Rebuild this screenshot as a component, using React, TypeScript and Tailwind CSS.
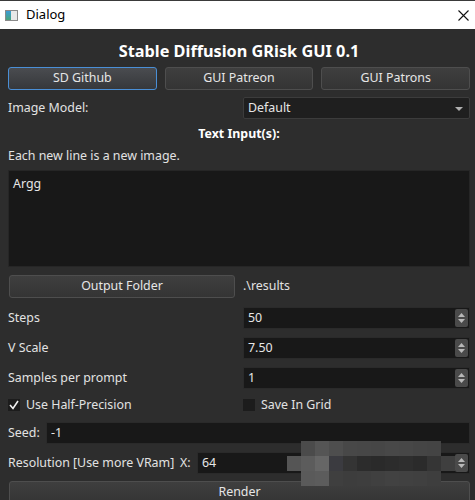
import React from "react";

const Spin = () => (
  <div className="absolute right-[1px] top-[1px] bottom-[1px] w-[13px] rounded-[2px] bg-[#4a4a4a] flex flex-col items-center justify-center gap-[2px]">
    <svg width="7" height="4" viewBox="0 0 7 4"><path d="M0 4 L3.5 0 L7 4 Z" fill="#b8b8b8" /></svg>
    <svg width="7" height="4" viewBox="0 0 7 4"><path d="M0 0 L3.5 4 L7 0 Z" fill="#b8b8b8" /></svg>
  </div>
);

const SpinBox = ({ value, className = "" }: { value: string; className?: string }) => (
  <div className={"relative h-[22px] bg-[#181818] border border-[#2a2a2a] flex items-center pl-[4px] text-[#e6e6e6] " + className}>
    {value}
    <Spin />
  </div>
);

const Btn = ({ label, active = false, className = "" }: { label: string; active?: boolean; className?: string }) => (
  <div
    className={
      "h-[23px] rounded-[3px] border flex items-center justify-center text-[#e6e6e6] " +
      (active
        ? "border-[#4a8fd6] bg-gradient-to-b from-[#4a4c50] to-[#36383b] "
        : "border-[#4e4e4e] bg-gradient-to-b from-[#3f3f3f] to-[#343434] ") +
      className
    }
  >
    {label}
  </div>
);

const blocks: string[][] = [
  ["bg-transparent", "bg-[#4b4b4b]", "bg-[#555555]", "bg-[#4e4e4e]", "bg-[#484848]", "bg-[#474747]", "bg-[#464646]", "bg-[#484848]", "bg-[#474747]", "bg-[#454545]", "bg-[#444444]", "bg-transparent"],
  ["bg-[#555555]", "bg-[#5c5c5c]", "bg-[#666666]", "bg-[#3b3b40]", "bg-[#343434]", "bg-[#2c2c2c]", "bg-[#2a2a2a]", "bg-[#2c2c2c]", "bg-[#2e2e2e]", "bg-[#2b2b2b]", "bg-[#353535]", "bg-[#3f3f3f]"],
  ["bg-transparent", "bg-[#5a5a5a]", "bg-[#5c5c5c]", "bg-[#3f3f3f]", "bg-[#3d3d3d]", "bg-[#3e3e3e]", "bg-[#404040]", "bg-[#424242]", "bg-[#414141]", "bg-[#404040]", "bg-[#3e3e3e]", "bg-transparent"],
];

export default function App() {
  return (
    <div
      className="relative w-[475px] h-[500px] overflow-hidden bg-[#2d2d2d] text-[12.4px] text-[#e2e2e2]"
      style={{ fontFamily: '"Noto Sans", "Open Sans", sans-serif' }}
    >
      {/* title bar */}
      <div className="h-[29px] bg-white border-t border-[#3a3a3a] flex items-center text-black">
        <div className="ml-[5px] w-[13px] h-[11px] border border-[#8a8a8a] flex">
          <div className="w-[5px] h-full bg-gradient-to-b from-[#3d9bd6] to-[#4aa37a]" />
          <div className="flex-1 bg-[#e8e8e8]" />
        </div>
        <span className="ml-[8px] text-[13px]">Dialog</span>
        <div className="flex-1" />
        <svg width="11" height="11" viewBox="0 0 11 11" className="mr-[6px]">
          <path d="M0.5 0.5 L10.5 10.5 M10.5 0.5 L0.5 10.5" stroke="#111" strokeWidth="1.1" />
        </svg>
      </div>

      <div className="pl-[8px] pr-[5px] flex flex-col">
        <div className="h-[38px] flex items-center justify-center pt-[6px] text-[16.3px] font-bold text-white whitespace-nowrap">
          Stable Diffusion GRisk GUI 0.1
        </div>
        <div className="grid grid-cols-3 gap-[8px]">
          <Btn label="SD Github" active />
          <Btn label="GUI Patreon" />
          <Btn label="GUI Patrons" />
        </div>

        <div className="mt-[7px] grid grid-cols-[235px_227px] items-center">
          <span>Image Model:</span>
          <div className="relative h-[22px] bg-[#1f1f1f] border border-[#3c3c3c] rounded-[2px] flex items-center pl-[4px] text-[#e6e6e6]">
            Default
            <svg width="8" height="4" viewBox="0 0 8 4" className="absolute right-[6px] top-[9px]">
              <path d="M0 0 L4 4 L8 0 Z" fill="#b0b0b0" />
            </svg>
          </div>
        </div>

        <div className="mt-[4px] h-[22px] flex items-center justify-center font-bold text-white">Text Input(s):</div>
        <div className="h-[22px] flex items-center">Each new line is a new image.</div>
        <div className="mt-[3px] h-[97px] bg-[#181818] border border-[#262626] px-[4px] pt-[4px] text-[#e6e6e6]">Argg</div>

        <div className="mt-[8px] grid grid-cols-[235px_227px] items-center">
          <Btn label="Output Folder" className="h-[22px] ml-[1px] mr-[8px]" />
          <span>.\results</span>
        </div>

        <div className="mt-[9px] grid grid-cols-[235px_227px] items-center">
          <span>Steps</span>
          <SpinBox value="50" />
        </div>
        <div className="mt-[8px] grid grid-cols-[235px_227px] items-center">
          <span>V Scale</span>
          <SpinBox value="7.50" />
        </div>
        <div className="mt-[8px] grid grid-cols-[235px_227px] items-center">
          <span>Samples per prompt</span>
          <SpinBox value="1" />
        </div>

        <div className="mt-[5px] h-[22px] grid grid-cols-[235px_227px] items-center">
          <div className="flex items-center">
            <div className="w-[12px] h-[12px] bg-[#1c1c1c] flex items-center justify-center">
              <svg width="10" height="10" viewBox="0 0 10 10">
                <path d="M1 5 L4 8.5 L9 1" stroke="#f0f0f0" strokeWidth="1.6" fill="none" />
              </svg>
            </div>
            <span className="ml-[6px]">Use Half-Precision</span>
          </div>
          <div className="flex items-center">
            <div className="w-[12px] h-[12px] bg-[#1c1c1c]" />
            <span className="ml-[6px]">Save In Grid</span>
          </div>
        </div>

        <div className="mt-[6px] flex items-center">
          <span className="w-[38px] shrink-0">Seed:</span>
          <div className="flex-1 h-[22px] bg-[#181818] border border-[#2a2a2a] flex items-center pl-[4px] text-[#e6e6e6]">-1</div>
        </div>

        <div className="mt-[8px] flex items-center">
          <span className="w-[172px] shrink-0 whitespace-nowrap">Resolution [Use more VRam]</span>
          <span className="w-[17px] shrink-0">X:</span>
          <SpinBox value="64" className="flex-1" />
        </div>

        <Btn label="Render" className="mt-[7px] h-[22px] ml-[1px]" />
      </div>

      {/* pixelated blur overlay */}
      <div className="absolute left-[287px] top-[441px] flex flex-col">
        {blocks.map((row, i) => (
          <div key={i} className="flex">
            {row.map((c, j) => (
              <div key={j} className={"w-[14px] h-[15px] " + c} />
            ))}
          </div>
        ))}
      </div>
    </div>
  );
}
